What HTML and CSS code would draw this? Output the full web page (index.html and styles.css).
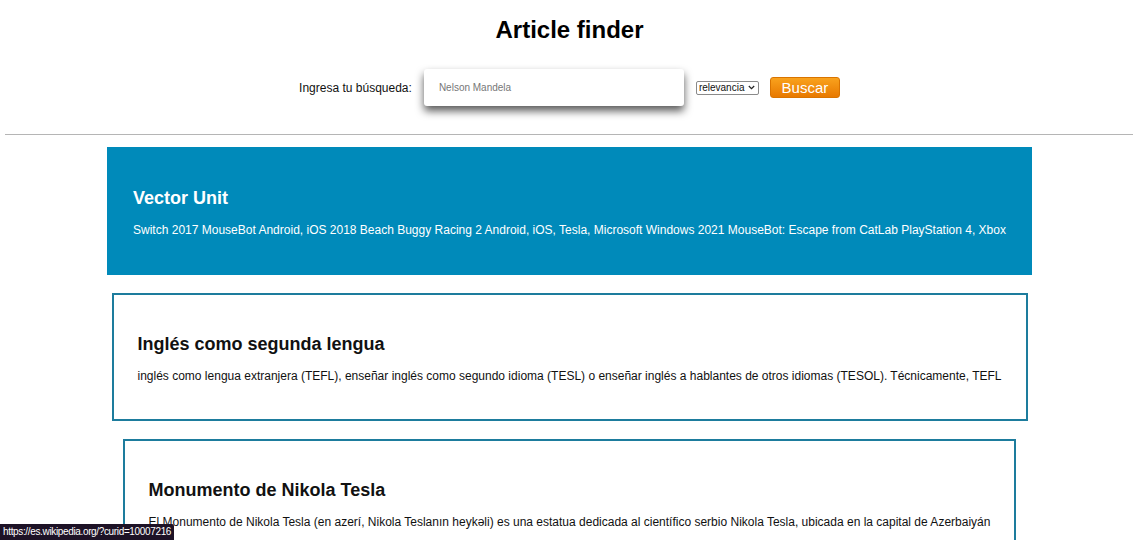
FILE: index.html
```html
<!DOCTYPE html>
<html lang="es">
<head>
<meta charset="utf-8">
<title>Article finder</title>
<link rel="stylesheet" href="styles.css">
</head>
<body>
<header class="header">
  <h1 class="title">Article finder</h1>
  <form class="search">
    <label class="search-label" for="q">Ingresa tu búsqueda:</label>
    <input class="search-input" id="q" type="text" placeholder="Nelson Mandela">
    <select class="search-select">
      <option>relevancia</option>
    </select>
    <button class="search-button" type="button">Buscar</button>
  </form>
</header>
<hr class="divider">
<main class="results">
  <article class="card card-active">
    <h2 class="card-title">Vector Unit</h2>
    <p class="card-text">Switch 2017 MouseBot Android, iOS 2018 Beach Buggy Racing 2 Android, iOS, Tesla, Microsoft Windows 2021 MouseBot: Escape from CatLab PlayStation 4, Xbox</p>
  </article>
  <article class="card">
    <h2 class="card-title">Inglés como segunda lengua</h2>
    <p class="card-text">inglés como lengua extranjera (TEFL), enseñar inglés como segundo idioma (TESL) o enseñar inglés a hablantes de otros idiomas (TESOL). Técnicamente, TEFL</p>
  </article>
  <article class="card">
    <h2 class="card-title">Monumento de Nikola Tesla</h2>
    <p class="card-text">El Monumento de Nikola Tesla (en azerí, Nikola Teslanın heykəli) es una estatua dedicada al científico serbio Nikola Tesla, ubicada en la capital de Azerbaiyán</p>
  </article>
</main>
<div class="status-bar">https://es.wikipedia.org/?curid=10007216</div>
</body>
</html>
```
FILE: styles.css
```css
html, body {
  margin: 0;
  padding: 0;
  background: #ffffff;
}

body {
  font-family: "Liberation Sans", Arial, sans-serif;
  color: #111;
}

.header {
  display: flex;
  flex-direction: column;
  align-items: center;
}

.title {
  margin: 16px 0 0;
  font-size: 24px;
  line-height: 28px;
  font-weight: 700;
  color: #000;
}

.search {
  display: flex;
  align-items: center;
  justify-content: center;
  gap: 12px;
  margin-top: 25px;
  margin-bottom: 28px;
}

.search-label {
  font-size: 12px;
  color: #111;
}

.search-input {
  box-sizing: border-box;
  width: 260px;
  height: 37px;
  padding: 0 15px;
  border: none;
  border-radius: 3px;
  background: #fff;
  font-family: "Liberation Sans", Arial, sans-serif;
  font-size: 10px;
  box-shadow: 0 5px 9px rgba(0, 0, 0, 0.65);
  outline: none;
}

.search-input::placeholder {
  color: #777;
}

.search-select {
  -webkit-appearance: none;
  appearance: none;
  box-sizing: border-box;
  width: 63px;
  height: 14px;
  padding: 0 0 0 2px;
  font-family: "Liberation Sans", Arial, sans-serif;
  font-size: 10px;
  line-height: 12px;
  border: 1px solid #8a8a8a;
  border-radius: 2px;
  color: #111;
  background: #fff url("data:image/svg+xml,%3Csvg xmlns='http://www.w3.org/2000/svg' width='7' height='5' viewBox='0 0 7 5'%3E%3Cpath d='M0.8 1 L3.5 3.7 L6.2 1' fill='none' stroke='%23222' stroke-width='1.2'/%3E%3C/svg%3E") no-repeat right 3px center;
}

.search-button {
  box-sizing: border-box;
  width: 70px;
  height: 21px;
  margin-left: -1px;
  padding: 0;
  font-family: "Liberation Sans", Arial, sans-serif;
  font-size: 15px;
  color: #fff;
  background: linear-gradient(#f9a21d, #e87900);
  border: 1px solid #d97400;
  border-radius: 3px;
}

.divider {
  margin: 0 6px 12px 5px;
  border: none;
  border-top: 1px solid #b5b5b5;
  height: 0;
}

.results {
  display: flex;
  flex-direction: column;
  align-items: center;
  gap: 18px;
}

.card {
  box-sizing: border-box;
  height: 128px;
  padding: 39px 24px 34px;
  border: 2px solid #1d7c9d;
  background: #fff;
  color: #111;
}

.card-active {
  background: #008aba;
  border-color: #008aba;
  color: #fff;
}

.card-title {
  margin: 0 0 14px;
  font-size: 18px;
  line-height: 21px;
  font-weight: 700;
  white-space: nowrap;
}

.card-text {
  margin: 0;
  font-size: 12px;
  line-height: 15px;
  white-space: nowrap;
}

.status-bar {
  position: fixed;
  left: 0;
  bottom: 0;
  height: 16px;
  padding: 0 3px;
  background: #1d1226;
  color: #fff;
  font-family: "Liberation Sans", Arial, sans-serif;
  font-size: 10px;
  letter-spacing: -0.35px;
  line-height: 16px;
  border-top-right-radius: 2px;
}
```
